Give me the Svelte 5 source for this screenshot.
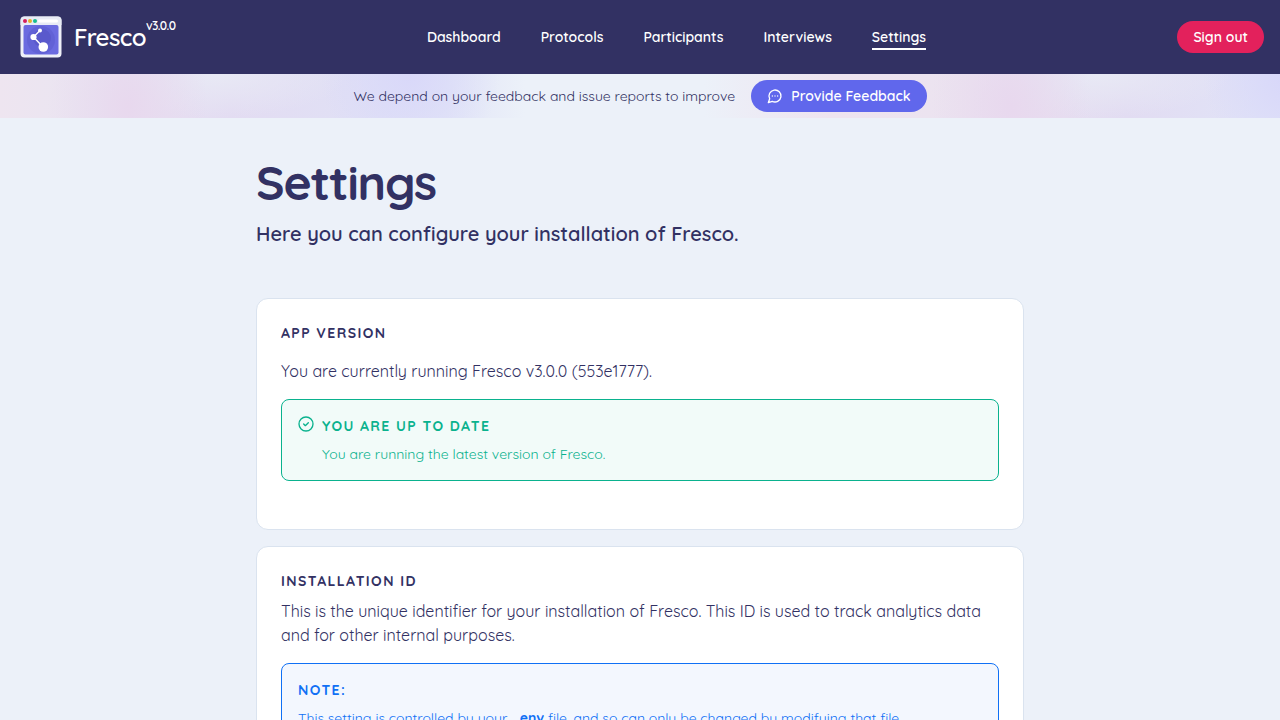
<script>
  const links = ['Dashboard', 'Protocols', 'Participants', 'Interviews', 'Settings'];
  const current = 'Settings';
</script>

<header class="topbar">
  <a class="brand" href="/dashboard">
    <svg class="logo" viewBox="0 0 42 42" aria-hidden="true">
      <rect x=".5" y=".5" width="41" height="41" rx="4" fill="#eef0f8" />
      <path d="M4.500 .5h33a4 4 0 0 1 4 4V9H.5V4.500a4 4 0 0 1 4-4z" fill="#e8ebf5" />
      <rect x="18" y="3.500" width="20" height="3" rx="1.500" fill="#fff" />
      <circle cx="5" cy="5" r="2" fill="#d5215e" />
      <circle cx="10" cy="5" r="2" fill="#e6b22e" />
      <circle cx="15" cy="5" r="2" fill="#16bd91" />
      <rect x="3.500" y="9" width="35" height="29.500" rx="2" fill="#6b6be0" />
      <circle cx="21" cy="24" r="14" fill="#6262d6" />
      <circle cx="22" cy="22" r="9" fill="#5a59cc" />
      <path d="M20 14.500 13.500 21 23 31" fill="none" stroke="#fff" stroke-width="1.400" />
      <circle cx="20" cy="14.500" r="2" fill="#fff" />
      <circle cx="13.500" cy="21" r="3.100" fill="#fff" />
      <circle cx="23.300" cy="31" r="4.800" fill="#fff" />
    </svg>
    <span class="name">Fresco</span><span class="version">v3.0.0</span>
  </a>
  <nav aria-label="Main">
    {#each links as link}
      <a href={'/' + link.toLowerCase()} class:active={link === current} aria-current={link === current ? 'page' : undefined}>{link}</a>
    {/each}
  </nav>
  <button class="pill signout" type="button">Sign out</button>
</header>

<aside class="banner">
  <span>We depend on your feedback and issue reports to improve</span>
  <button class="pill feedback" type="button">
    <svg viewBox="0 0 24 24" aria-hidden="true">
      <path d="M7.900 20A9 9 0 1 0 4 16.100L2 22Z" />
      <path d="M8 12h.01M12 12h.01M16 12h.01" />
    </svg>
    Provide Feedback
  </button>
</aside>

<main>
  <h1>Settings</h1>
  <p class="lead">Here you can configure your installation of Fresco.</p>

  <section class="card version-card">
    <h2>App Version</h2>
    <p>You are currently running Fresco v3.0.0 (553e1777).</p>
    <div class="alert success">
      <svg viewBox="0 0 24 24" aria-hidden="true">
        <circle cx="12" cy="12" r="10.500" />
        <path d="m8.500 12 2.500 2.500 4.500-4.500" />
      </svg>
      <div>
        <h3>You are up to date</h3>
        <p>You are running the latest version of Fresco.</p>
      </div>
    </div>
  </section>

  <section class="card">
    <h2>Installation ID</h2>
    <p>This is the unique identifier for your installation of Fresco. This ID is used to track analytics data and for other internal purposes.</p>
    <div class="alert info">
      <div>
        <h3>Note:</h3>
        <p>This setting is controlled by your <code>.env</code> file, and so can only be changed by modifying that file.</p>
      </div>
    </div>
  </section>
</main>

<style>
  :global(html) {
    scrollbar-width: none;
  }
  :global(body) {
    background: #ecf1f9;
    color: #323163;
    font: 400 16px/24px Quicksand, Lato, sans-serif;
    -webkit-font-smoothing: antialiased;
  }
  h1, h2, h3, p {
    margin: 0;
  }
  .topbar {
    display: flex;
    align-items: center;
    justify-content: space-between;
    padding: 16px 16px 16px 20px;
    background: #323163;
    color: #fff;
  }
  .topbar a {
    color: inherit;
    text-decoration: none;
  }
  .brand {
    display: flex;
    align-items: center;
    font-size: 24px;
    letter-spacing: -0.025em;
  }
  .logo {
    width: 42px;
    height: 42px;
    margin-right: 12px;
  }
  .name {
    line-height: 32px;
    font-weight: 600;
  }
  .version {
    align-self: flex-start;
    font-size: 12px;
    line-height: 20px;
    font-weight: 600;
  }
  nav {
    display: flex;
    gap: 40px;
  }
  nav a {
    border-block: 2px solid transparent;
    font-size: 14px;
    line-height: 22px;
    font-weight: 600;
  }
  nav a.active {
    border-bottom-color: #fff;
  }
  .pill {
    display: flex;
    align-items: center;
    gap: 8px;
    height: 32px;
    padding: 0 16px;
    border: 0;
    border-radius: 16px;
    color: #fff;
    font: inherit;
    font-size: 14px;
    font-weight: 600;
    cursor: pointer;
  }
  .signout {
    background: #e3215c;
  }
  .feedback {
    background: #6067ec;
  }
  .pill svg {
    width: 16px;
    height: 16px;
    fill: none;
    stroke: currentColor;
    stroke-width: 2;
    stroke-linecap: round;
    stroke-linejoin: round;
  }
  .banner {
    display: flex;
    align-items: center;
    justify-content: center;
    gap: 16px;
    padding: 6px 0;
    font-size: 14px;
    background:
      radial-gradient(80px 120px at 10% 75%, #e8d8ee, #e8d8ee00),
      radial-gradient(130px 44px at 17% 0, #e8e9f5, #e8e9f500),
      radial-gradient(90px 90px at 32% 0, #d9d8f9, #d9d8f900),
      radial-gradient(80px 120px at 79% 75%, #e8d8ee, #e8d8ee00),
      radial-gradient(130px 44px at 86% 0, #e8e9f5, #e8e9f500),
      radial-gradient(90px 90px at 101% 0, #d7d6fa, #d7d6fa00),
      linear-gradient(90deg, #eee5f0, #e9e5f2 8%, #e3dcf2 18%, #e0e1f6 30%, #e2e5f7 35%, #ecf1f9 41%, #ecf1f9 55%, #eee4f0 65%, #ebe3f0 76%, #e2dcf2 88%, #e1e3f7 98%);
  }
  main {
    max-width: 768px;
    margin: 0 auto;
    padding: 36px 16px;
  }
  h1 {
    font-size: 48px;
    line-height: 56px;
    font-weight: 700;
    letter-spacing: -0.025em;
  }
  .lead {
    margin: 10px 0 50px;
    font-size: 20px;
    line-height: 28px;
    font-weight: 600;
  }
  .card {
    margin-bottom: 16px;
    padding: 24px;
    border: 1px solid #dae3ef;
    border-radius: 12px;
    background: #fff;
  }
  h2, h3 {
    font-size: 14px;
    line-height: 20px;
    font-weight: 700;
    letter-spacing: 0.1em;
    text-transform: uppercase;
  }
  h2 {
    margin-bottom: 8px;
  }
  .version-card {
    padding-bottom: 48px;
  }
  .version-card h2 {
    margin-bottom: 16px;
  }
  .alert {
    display: flex;
    gap: 8px;
    margin-top: 16px;
    padding: 16px;
    border: 1px solid;
    border-radius: 8px;
  }
  .alert h3 {
    margin-bottom: 8px;
  }
  .alert p {
    font-size: 14px;
    line-height: 20px;
  }
  .alert svg {
    width: 16px;
    height: 16px;
    fill: none;
    stroke: currentColor;
    stroke-width: 2;
    stroke-linecap: round;
    stroke-linejoin: round;
  }
  .success {
    color: #0ab28e;
    background: #f2fbf9;
  }
  .info {
    color: #1070f5;
    background: #f3f7fe;
  }
  code {
    margin-left: 5px;
    font: inherit;
    font-weight: 700;
  }
  @media (max-width: 800px) {
    .topbar, .banner {
      flex-wrap: wrap;
      gap: 12px;
    }
    nav {
      flex-wrap: wrap;
      gap: 16px;
    }
  }
</style>
